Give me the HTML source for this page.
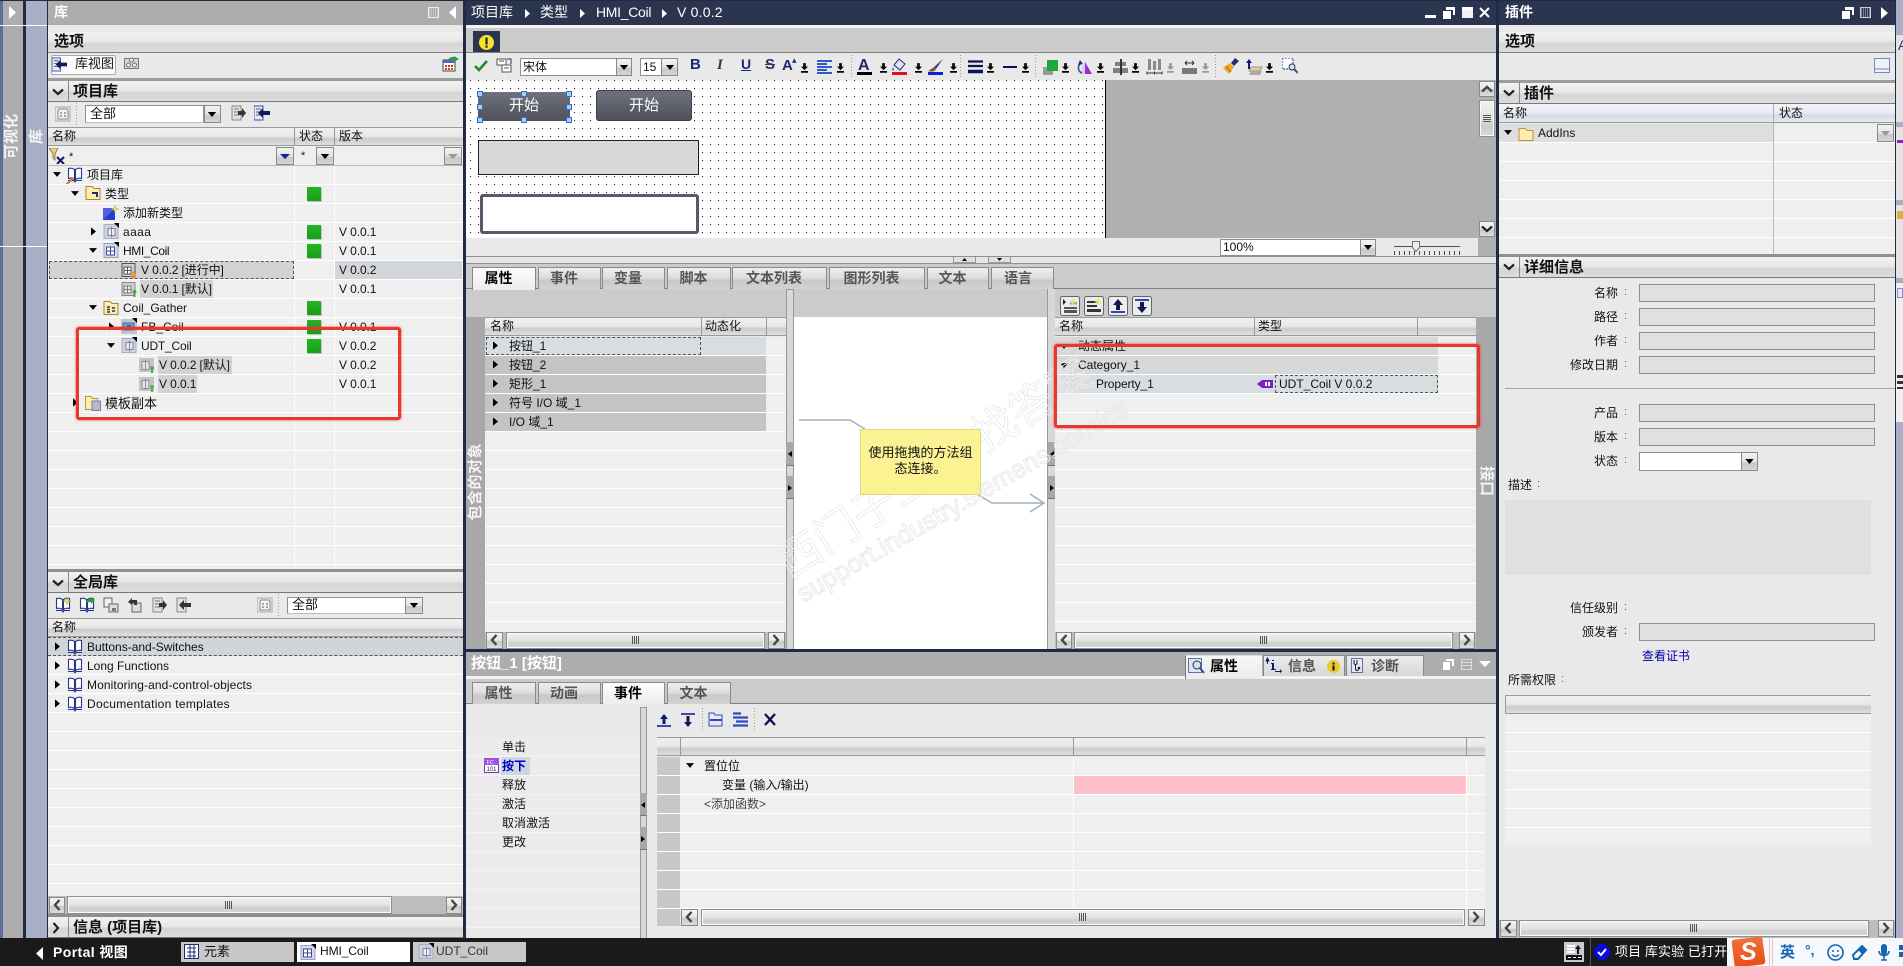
<!DOCTYPE html>
<html lang="zh-CN"><head><meta charset="utf-8"><title>HMI_Coil</title>
<style>
html,body{margin:0;padding:0;background:#1a1a1a}
#r{position:relative;width:1903px;height:966px;overflow:hidden;background:#e9e9e9;font:12px/19px "Liberation Sans","WenQuanYi Zen Hei","Noto Sans CJK SC",sans-serif;color:#111}
.b{position:absolute;box-sizing:border-box}
.t{position:absolute;white-space:nowrap;height:19px}
svg.i{position:absolute;overflow:visible}
.rows{background:repeating-linear-gradient(#efefef 0 18px,#fff 18px 19px)}
.hd{background:linear-gradient(#f0f0f0 0,#e8e8e8 50%,#cbcbcb 62%,#dfdfdf 100%);border-top:1px solid #9a9a9a;border-bottom:1px solid #9a9a9a}
.sec{background:linear-gradient(#f2f2f2 0,#e6e6e6 50%,#d5d5d5 55%,#dcdcdc 100%);border-bottom:1px solid #777}
.sec .t,.ttl{font-size:15px;font-weight:bold;color:#111}
.btn{background:linear-gradient(#f4f4f4,#e6e6e6 50%,#c8c8c8 55%,#dedede);border:1px solid #8a8a8a}
.sb{background:#bdbdbd}
.th{background:linear-gradient(#f1f1f1,#e2e2e2 50%,#cdcdcd 70%,#d8d8d8);border:1px solid #8f8f8f;box-shadow:inset 0 0 0 1px #fafafa}
.gr{position:absolute;width:8px;height:8px;background:repeating-linear-gradient(90deg,#555 0 1px,transparent 1px 2px)}
.tab{position:absolute;box-sizing:border-box;border:1px solid #8a8a8a;border-bottom:0;padding-right:11px;background:linear-gradient(#eeeeee,#dedede 45%,#c9c9c9 60%,#d2d2d2);text-align:center;font:bold 14px/21px "Liberation Sans","WenQuanYi Zen Hei","Noto Sans CJK SC",sans-serif;color:#555;height:22px}
.tab.a{background:linear-gradient(#fdfdfd,#ececec);color:#000;height:23px}
.fld{position:absolute;box-sizing:border-box;left:1639px;width:236px;height:18px;background:#e0e0e0;border:1px solid #8f8f8f}
.lb{position:absolute;white-space:nowrap;right:285px;height:19px}
.cl{position:absolute;left:1624px;width:4px;font-size:11px;color:#666;line-height:17px}
.wl{position:absolute;width:1px;background:#fff}
.st{position:absolute;width:14px;height:14px;background:linear-gradient(#24b524,#1a9d1a);box-shadow:1px 1px 0 #b5c9b5}
.v{position:absolute;writing-mode:vertical-rl;text-orientation:sideways;color:#f4f4f4;font-size:15px;font-weight:bold;white-space:nowrap}
.rd{position:absolute;box-sizing:border-box;border:3px solid #e8372c;border-radius:3px;box-shadow:0 0 2px #e8372c}
.hl{position:absolute;height:18px;background:#d2d2d2}
.combo{position:absolute;box-sizing:border-box;background:#fff;border:1px solid #8f8f8f;border-bottom-color:#bbb}
.cbtn{position:absolute;box-sizing:border-box;background:linear-gradient(#f3f3f3,#e3e3e3 50%,#c8c8c8 60%,#d5d5d5);border:1px solid #8a8a8a}
.h{position:absolute;width:6px;height:6px;background:#a9cdf2;border:1px solid #2f6fc4;box-sizing:border-box}
.ver{letter-spacing:-.1px}
</style></head><body><div id="r">
<svg width="0" height="0" style="position:absolute"><defs>
<symbol id="tr" viewBox="0 0 6 10"><path d="M0 0l6 5-6 5z" fill="#000"/></symbol>
<symbol id="td" viewBox="0 0 10 6"><path d="M0 0h10l-5 6z" fill="#000"/></symbol>
<symbol id="cl" viewBox="0 0 10 12"><path d="M7.500 1L3 6l4.500 5" fill="none" stroke="#444" stroke-width="2.400"/></symbol>
<symbol id="cr" viewBox="0 0 10 12"><path d="M2.500 1L7 6l-4.500 5" fill="none" stroke="#444" stroke-width="2.400"/></symbol>
<symbol id="cu" viewBox="0 0 12 10"><path d="M1 7.500L6 3l5 4.500" fill="none" stroke="#444" stroke-width="2.400"/></symbol>
<symbol id="cd" viewBox="0 0 12 10"><path d="M1 2.500L6 7l5-4.500" fill="none" stroke="#222" stroke-width="2.200"/></symbol>
<symbol id="book" viewBox="0 0 16 16"><path d="M1.500 1.500c2-.5 4-.5 6 1v10c-2-1.500-4-1.500-6-1zM14.500 1.500c-2-.5-4-.5-6 1v10c2-1.500 4-1.500 6-1z" fill="#fff" stroke="#26358f" stroke-width="1.100"/><path d="M1 13.500h6l1 1.500 1-1.500h6" fill="none" stroke="#26358f" stroke-width="1.100"/></symbol>
<symbol id="folder" viewBox="0 0 16 16"><path d="M1 2.500h6l2 2h6v10H1z" fill="#fdeeb0" stroke="#b8963c"/></symbol>
<symbol id="ft" viewBox="0 0 16 16"><path d="M1 1.500h6l2 2h6v11H1z" fill="#fdeeb0" stroke="#a8862c"/><path d="M7 7h6v5h-2V9H7z" fill="#222d70"/></symbol>
<symbol id="ty" viewBox="0 0 16 16"><rect x="1" y="1.500" width="14" height="14" fill="#d7dae8" stroke="#9aa0c0"/><rect x="3.500" y="5" width="8" height="8" fill="#fff" stroke="#3a4a9a"/><path d="M7.500 5v8M3.500 9h8" stroke="#3a4a9a"/><path d="M11 0h5v5z" fill="#000"/></symbol>
<symbol id="ud" viewBox="0 0 16 16"><rect x="1" y="1.500" width="14" height="14" fill="#cfd2de" stroke="#a9adc0"/><path d="M5 5.500h7v7H5zM8.500 3.500v11" fill="#eceef4" stroke="#7d83a5"/><path d="M11 0h5v5z" fill="#000"/></symbol>
<symbol id="vr" viewBox="0 0 16 16"><rect x="0" y="1" width="15" height="14" fill="#c4c4c4"/><path d="M3 4.500h7v8H3zM6.500 3v11" fill="#e6e6ea" stroke="#8f8f9f"/><path d="M11 11a2 2 0 1 1 4 0c0 1.200-1 1.500-1 1.500V16h-2v-3.500S11 12 11 11z" fill="#5aa95a"/></symbol>
<symbol id="vg" viewBox="0 0 16 16"><rect x="1" y="1.500" width="13" height="13" fill="#d0d0d0" stroke="#555"/><rect x="3" y="5" width="7" height="7" fill="#fff" stroke="#555"/><path d="M6.500 5v7M3 8.500h7" stroke="#555"/><path d="M12.500 8l3 7h-6z" fill="#f0a020"/><path d="M10.500 15h4" stroke="#d06010"/></symbol>
<symbol id="vd" viewBox="0 0 16 16"><rect x="1" y="1.500" width="13" height="13" fill="#d0d0d0" stroke="#888"/><rect x="3" y="5" width="7" height="7" fill="#eee" stroke="#777"/><path d="M6.500 5v7M3 8.500h7" stroke="#777"/><path d="M11.500 11a2 2 0 1 1 4 0c0 1.200-1 1.500-1 1.500V16h-2v-3.500s-1-.5-1-1.500z" fill="#4aa04a"/></symbol>
<symbol id="add" viewBox="0 0 16 16"><path d="M0 3h12v12H0z" fill="#2a3bd0"/><path d="M0 3h12L0 15z" fill="#4f5fe0"/><path d="M12 0l1 3 3 1-3 1-1 3-1-3-3-1 3-1z" fill="#e6e84a" stroke="#999a30" stroke-width=".3"/></symbol>
<symbol id="cg" viewBox="0 0 16 16"><path d="M1 1.500h6l2 2h6v11H1z" fill="#fdeeb0" stroke="#a8862c"/><path d="M4 7h3M4 9.500h3M4 12h3M9 8h3M9 11h3" stroke="#222d70" stroke-width="1.500"/></symbol>
<symbol id="fb" viewBox="0 0 16 16"><rect x="0" y="1" width="16" height="15" fill="#c4c4c4"/><rect x="2" y="5" width="11" height="7" fill="#5ba6dc" stroke="#3a78a8"/><path d="M6 7h4v4H6z" fill="#2a63a8"/><path d="M11 0h5v5z" fill="#000"/></symbol>
<symbol id="dl" viewBox="0 0 8 12"><path d="M2.500 1h3v4h2.500L4 9 0 5h2.500z" fill="#000"/><rect y="10" width="8" height="2" fill="#000"/></symbol>
<symbol id="dg" viewBox="0 0 8 12"><path d="M2.500 1h3v4h2.500L4 9 0 5h2.500z" fill="#999"/><rect y="10" width="8" height="2" fill="#999"/></symbol>
<symbol id="to" viewBox="0 0 16 16"><path d="M2 1h9v14H2z" fill="#e0e0e8" stroke="#888"/><path d="M4 4h5M4 7h5M4 10h5" stroke="#777"/><path d="M8 6h4V3l4 5-4 5v-3H8z" fill="#333"/></symbol>
<symbol id="ti" viewBox="0 0 16 16"><path d="M0 1h9v14H0z" fill="#e7e9f8" stroke="#3a4aa8"/><path d="M2 4h5M2 7h5M2 10h5" stroke="#556"/><path d="M16 6H9V3L4 8l5 5v-3h7z" fill="#111a60"/></symbol>
<symbol id="flt" viewBox="0 0 16 16"><rect x="0" y="1" width="15" height="14" fill="#e7e7e7" stroke="#aaa"/><path d="M3 5l1-2h8l1 2v8H3z" fill="#f3f3f3" stroke="#888"/><path d="M5 7h2M9 7h2M5 10h2M9 10h2" stroke="#555"/></symbol>
<symbol id="ff" viewBox="0 0 16 16"><path d="M0 0h9L6 6v6L4 10V6z" fill="#e8d070" stroke="#807030" stroke-width=".8"/><path d="M8 9l7 7M15 9l-7 7" stroke="#0a1a70" stroke-width="2"/></symbol>
<symbol id="tb" viewBox="0 0 20 20"><rect x=".5" y=".5" width="19" height="19" rx="2" fill="#ececec" stroke="#666"/></symbol>
<symbol id="zm" viewBox="0 0 16 16"><path d="M0 0h11v11H0z" fill="#fff" stroke="#222a70" stroke-dasharray="2 1"/><circle cx="10" cy="9" r="3" fill="#cfe3f5" stroke="#333"/><path d="M12 11l4 4" stroke="#33509a" stroke-width="2"/></symbol>
</defs></svg>

<!-- left strips -->
<div class="b" style="left:0;top:0;width:3px;height:938px;background:#5d6c9c"></div>
<div class="b" style="left:3px;top:0;width:20px;height:938px;background:#adadad"></div>
<div class="b" style="left:23px;top:0;width:3px;height:938px;background:#1f2a44"></div>
<div class="b" style="left:26px;top:0;width:21px;height:938px;background:#a9b0c6"></div>
<div class="b" style="left:47px;top:0;width:1px;height:938px;background:#1f2a44"></div>
<div class="b" style="left:0;top:0;width:1903px;height:1px;background:#1f2a44"></div>
<div class="b" style="left:0;top:25px;width:47px;height:1px;background:#fff"></div>
<div class="b" style="left:0;top:246px;width:47px;height:1px;background:#fff"></div>
<svg class="i" style="left:9px;top:6px" width="7" height="13"><path d="M0 0l7 6.500-7 6.500z" fill="#fff"/></svg>
<div class="v" style="left:2px;top:113px;height:46px;transform:rotate(180deg)">可视化</div>
<div class="v" style="left:27px;top:129px;transform:rotate(180deg)">库</div>

<!-- LEFT PANEL -->
<div class="b" style="left:48px;top:1px;width:415px;height:24px;background:#adadad"></div>
<span class="t ttl" style="left:54px;top:3px;color:#fff;font-size:14px">库</span>
<div class="b" style="left:428px;top:7px;width:11px;height:11px;border:1px solid #eee;background:repeating-linear-gradient(90deg,#c8c8c8 0 1px,#aaa 1px 2px)"></div>
<svg class="i" style="left:449px;top:6px" width="7" height="13"><path d="M7 0L0 6.500 7 13z" fill="#fff"/></svg>
<div class="b sec" style="left:48px;top:32px;width:415px;height:21px;border-bottom-color:#808080"><span class="t" style="left:6px;top:0">选项</span></div>
<div class="b" style="left:51px;top:55px;width:65px;height:20px;background:#fafafa;border:1px solid #aaa;border-radius:2px"></div>
<svg class="i" style="left:52px;top:57px" width="15" height="15"><use href="#ti"/></svg>
<span class="t" style="left:75px;top:54px;font-size:13px">库视图</span>
<svg class="i" style="left:124px;top:56px" width="15" height="14"><rect x=".5" y="2.500" width="14" height="10" fill="#d5d5d5" stroke="#777"/><circle cx="7.500" cy="4" r="2" fill="#eee" stroke="#777"/><circle cx="4.500" cy="9" r="2" fill="#eee" stroke="#777"/><circle cx="10.500" cy="9" r="2" fill="#eee" stroke="#777"/></svg>
<svg class="i" style="left:442px;top:56px" width="17" height="16"><rect x="1" y="4" width="12" height="11" fill="#fff" stroke="#444"/><path d="M1 4h12v3H1z" fill="#5068c0"/><path d="M3 9h2v2H3zM6 9h2v2H6zM9 9h2v2H9zM3 12h2v2H3zM6 12h2v2H6zM9 12h2v2H9z" fill="#c04020"/><path d="M6 4c1-3 4-3 6-3V0l5 3-5 3V4c-2 0-4 0-6 0z" fill="#2aa040"/></svg>
<div class="b" style="left:48px;top:78px;width:415px;height:3px;background:#9c9c9c"></div>
<div class="b sec" style="left:48px;top:81px;width:415px;height:21px"><span class="t" style="left:25px;top:1px">项目库</span></div>
<div class="b" style="left:68px;top:81px;width:1px;height:20px;background:#888"></div>
<svg class="i" style="left:52px;top:87px" width="12" height="10"><use href="#cd"/></svg>
<svg class="i" style="left:55px;top:106px" width="16" height="16"><use href="#flt"/></svg>
<div class="b" style="left:76px;top:103px;width:1px;height:22px;background-image:repeating-linear-gradient(#999 0 1px,transparent 1px 3px)"></div>
<div class="combo" style="left:85px;top:105px;width:119px;height:18px"></div>
<span class="t" style="left:90px;top:104px;font-size:13px">全部</span>
<div class="cbtn" style="left:204px;top:105px;width:17px;height:18px"></div>
<svg class="i" style="left:207px;top:112px" width="10" height="5"><use href="#td"/></svg>
<svg class="i" style="left:230px;top:105px" width="16" height="16"><use href="#to"/></svg>
<svg class="i" style="left:254px;top:105px" width="16" height="16"><use href="#ti"/></svg>
<div class="b hd" style="left:48px;top:127px;width:415px;height:19px"></div>
<div class="b" style="left:294px;top:127px;width:1px;height:19px;background:#999"></div>
<div class="b" style="left:334px;top:127px;width:1px;height:19px;background:#999"></div>
<span class="t" style="left:52px;top:127px">名称</span><span class="t" style="left:299px;top:127px">状态</span><span class="t" style="left:339px;top:127px">版本</span>
<div class="b" style="left:48px;top:146px;width:415px;height:20px;background:#efefef;border-bottom:1px solid #bbb"></div>
<svg class="i" style="left:49px;top:148px" width="16" height="16"><use href="#ff"/></svg>
<span class="t" style="left:69px;top:148px;font-size:11px">*</span>
<div class="cbtn" style="left:276px;top:147px;width:18px;height:18px"></div>
<svg class="i" style="left:280px;top:154px" width="10" height="5"><path d="M0 0h10l-5 5z" fill="#1420a0"/></svg>
<span class="t" style="left:301px;top:147px;font-size:11px">*</span>
<div class="cbtn" style="left:316px;top:147px;width:18px;height:18px"></div>
<svg class="i" style="left:320px;top:154px" width="10" height="5"><use href="#td"/></svg>
<div class="cbtn" style="left:444px;top:147px;width:18px;height:18px"></div>
<svg class="i" style="left:448px;top:154px" width="10" height="5"><path d="M0 0h10l-5 5z" fill="#999"/></svg>

<div class="b rows" style="left:48px;top:166px;width:415px;height:403px"></div>
<div class="wl" style="left:294px;top:166px;height:403px"></div>
<div class="wl" style="left:334px;top:166px;height:403px"></div>
<div class="b" style="left:49px;top:261px;width:245px;height:18px;background:#d2d2d2;border:1px dashed #555"></div>
<div class="b" style="left:335px;top:261px;width:127px;height:18px;background:#d2d6da"></div>
<div class="hl" style="left:140px;top:280px;width:73px"></div>
<div class="hl" style="left:158px;top:356px;width:74px"></div>
<div class="hl" style="left:158px;top:375px;width:39px"></div>

<svg class="i" style="left:53px;top:172px" width="8" height="5"><use href="#td"/></svg>
<svg class="i" style="left:67px;top:167px" width="16" height="16"><use href="#book"/></svg>
<svg class="i" style="left:66px;top:176px" width="8" height="8"><path d="M0 8l2-2 4-5 2 2-5 4z" fill="#e89030" stroke="#804010" stroke-width=".5"/></svg>
<span class="t" style="left:87px;top:166px">项目库</span>
<svg class="i" style="left:71px;top:191px" width="8" height="5"><use href="#td"/></svg>
<svg class="i" style="left:85px;top:185px" width="16" height="16"><use href="#ft"/></svg>
<span class="t" style="left:105px;top:185px">类型</span>
<svg class="i" style="left:103px;top:205px" width="16" height="16"><use href="#add"/></svg>
<span class="t" style="left:123px;top:204px">添加新类型</span>
<svg class="i" style="left:91px;top:227px" width="5" height="9"><use href="#tr"/></svg>
<svg class="i" style="left:103px;top:223px" width="16" height="16"><use href="#ud"/></svg>
<span class="t" style="left:123px;top:223px;letter-spacing:.4px">aaaa</span>
<svg class="i" style="left:89px;top:248px" width="8" height="5"><use href="#td"/></svg>
<svg class="i" style="left:103px;top:242px" width="16" height="16"><use href="#ty"/></svg>
<span class="t" style="left:123px;top:242px;letter-spacing:-.4px">HMI_Coil</span>
<svg class="i" style="left:121px;top:262px" width="16" height="16"><use href="#vg"/></svg>
<span class="t ver" style="left:141px;top:261px">V 0.0.2 [进行中]</span>
<svg class="i" style="left:121px;top:281px" width="16" height="16"><use href="#vd"/></svg>
<span class="t ver" style="left:141px;top:280px">V 0.0.1 [默认]</span>
<svg class="i" style="left:89px;top:305px" width="8" height="5"><use href="#td"/></svg>
<svg class="i" style="left:103px;top:300px" width="16" height="16"><use href="#cg"/></svg>
<span class="t" style="left:123px;top:299px">Coil_Gather</span>
<svg class="i" style="left:109px;top:322px" width="5" height="9"><use href="#tr"/></svg>
<svg class="i" style="left:121px;top:318px" width="16" height="16"><use href="#fb"/></svg>
<span class="t" style="left:141px;top:318px">FB_Coil</span>
<svg class="i" style="left:107px;top:343px" width="8" height="5"><use href="#td"/></svg>
<svg class="i" style="left:121px;top:337px" width="16" height="16"><use href="#ud"/></svg>
<span class="t" style="left:141px;top:337px;letter-spacing:-.2px">UDT_Coil</span>
<svg class="i" style="left:139px;top:357px" width="16" height="16"><use href="#vr"/></svg>
<span class="t ver" style="left:159px;top:356px">V 0.0.2 [默认]</span>
<svg class="i" style="left:139px;top:376px" width="16" height="16"><use href="#vr"/></svg>
<span class="t ver" style="left:159px;top:375px">V 0.0.1</span>
<svg class="i" style="left:73px;top:398px" width="5" height="9"><use href="#tr"/></svg>
<svg class="i" style="left:85px;top:395px" width="16" height="16"><path d="M.5 1.500h5l2 2h5v11h-12z" fill="#fdeeb0" stroke="#b8963c"/><rect x="7" y="6" width="8.500" height="9.500" fill="#b4bad6" stroke="#7a80a0"/></svg>
<span class="t" style="left:105px;top:394px;font-size:13px">模板副本</span>
<div class="st" style="left:307px;top:187px"></div><div class="st" style="left:307px;top:225px"></div><div class="st" style="left:307px;top:244px"></div><div class="st" style="left:307px;top:301px"></div><div class="st" style="left:307px;top:320px"></div><div class="st" style="left:307px;top:339px"></div>
<span class="t ver" style="left:339px;top:223px">V 0.0.1</span><span class="t ver" style="left:339px;top:242px">V 0.0.1</span><span class="t ver" style="left:339px;top:261px">V 0.0.2</span><span class="t ver" style="left:339px;top:280px">V 0.0.1</span><span class="t ver" style="left:339px;top:318px">V 0.0.1</span><span class="t ver" style="left:339px;top:337px">V 0.0.2</span><span class="t ver" style="left:339px;top:356px">V 0.0.2</span><span class="t ver" style="left:339px;top:375px">V 0.0.1</span>
<div class="rd" style="left:76px;top:327px;width:325px;height:93px"></div>

<!-- global lib -->
<div class="b" style="left:48px;top:569px;width:415px;height:3px;background:#909090"></div>
<div class="b sec" style="left:48px;top:572px;width:415px;height:21px"><span class="t" style="left:25px;top:1px">全局库</span></div>
<div class="b" style="left:68px;top:572px;width:1px;height:20px;background:#888"></div>
<svg class="i" style="left:52px;top:578px" width="12" height="10"><use href="#cd"/></svg>
<svg class="i" style="left:55px;top:597px" width="16" height="16"><use href="#book"/><path d="M12 0l1 3 3 1-3 1-1 3-1-3-3-1 3-1z" fill="#e6e84a" stroke="#999a30" stroke-width=".4"/></svg>
<svg class="i" style="left:79px;top:597px" width="16" height="16"><use href="#book"/><path d="M7 6c0-3 2-4 5-4V0l4 3-4 4V5c-2 0-3 0-5 1z" fill="#2aa040"/></svg>
<svg class="i" style="left:103px;top:597px" width="16" height="16"><path d="M1 1h8v9H1z" fill="#eee" stroke="#666"/><path d="M6 7h9v8H6z" fill="#ddd" stroke="#666"/><path d="M9 11h4v3H9z" fill="#777"/></svg>
<svg class="i" style="left:127px;top:597px" width="16" height="16"><path d="M5 6h9v9H5z" fill="#ddd" stroke="#666"/><path d="M1 5l4-4v2h5v5H7V6H5v2z" fill="#333"/></svg>
<svg class="i" style="left:151px;top:597px" width="16" height="16"><use href="#to"/></svg>
<svg class="i" style="left:175px;top:597px" width="16" height="16"><path d="M2 1h9v14H2z" fill="#e0e0e0" stroke="#888"/><path d="M16 6H9V3L4 8l5 5v-3h7z" fill="#333"/></svg>
<svg class="i" style="left:257px;top:597px" width="16" height="16"><use href="#flt"/></svg>
<div class="b" style="left:278px;top:594px;width:1px;height:22px;background-image:repeating-linear-gradient(#999 0 1px,transparent 1px 3px)"></div>
<div class="combo" style="left:287px;top:597px;width:119px;height:17px"></div>
<span class="t" style="left:292px;top:595px;font-size:13px">全部</span>
<div class="cbtn" style="left:405px;top:597px;width:18px;height:17px"></div>
<svg class="i" style="left:409px;top:603px" width="10" height="5"><use href="#td"/></svg>
<div class="b hd" style="left:48px;top:618px;width:415px;height:19px"></div>
<span class="t" style="left:52px;top:618px">名称</span>
<div class="b rows" style="left:48px;top:637px;width:415px;height:259px"></div>
<div class="b" style="left:48px;top:637px;width:415px;height:19px;background:#d0d5da;border-top:1px dashed #555;border-bottom:1px dashed #555"></div>
<svg class="i" style="left:55px;top:642px" width="5" height="9"><use href="#tr"/></svg><svg class="i" style="left:67px;top:639px" width="16" height="16"><use href="#book"/></svg><span class="t" style="left:87px;top:638px">Buttons-and-Switches</span>
<svg class="i" style="left:55px;top:661px" width="5" height="9"><use href="#tr"/></svg><svg class="i" style="left:67px;top:658px" width="16" height="16"><use href="#book"/></svg><span class="t" style="left:87px;top:657px">Long Functions</span>
<svg class="i" style="left:55px;top:680px" width="5" height="9"><use href="#tr"/></svg><svg class="i" style="left:67px;top:677px" width="16" height="16"><use href="#book"/></svg><span class="t" style="left:87px;top:676px;letter-spacing:.1px">Monitoring-and-control-objects</span>
<svg class="i" style="left:55px;top:699px" width="5" height="9"><use href="#tr"/></svg><svg class="i" style="left:67px;top:696px" width="16" height="16"><use href="#book"/></svg><span class="t" style="left:87px;top:695px;letter-spacing:.3px">Documentation templates</span>
<div class="b sb" style="left:48px;top:896px;width:415px;height:18px"></div>
<div class="b btn" style="left:49px;top:897px;width:16px;height:17px"></div><svg class="i" style="left:52px;top:899px" width="10" height="12"><use href="#cl"/></svg>
<div class="b th" style="left:67px;top:896px;width:325px;height:18px"></div><div class="gr" style="left:225px;top:901px"></div>
<div class="b btn" style="left:446px;top:897px;width:16px;height:17px"></div><svg class="i" style="left:449px;top:899px" width="10" height="12"><use href="#cr"/></svg>
<div class="b" style="left:48px;top:914px;width:415px;height:3px;background:#8f8f8f"></div>
<div class="b sec" style="left:48px;top:917px;width:415px;height:21px"><span class="t" style="left:25px;top:1px">信息 (项目库)</span></div>
<div class="b" style="left:68px;top:917px;width:1px;height:20px;background:#888"></div>
<svg class="i" style="left:52px;top:922px" width="8" height="12"><path d="M1.500 1L6 6l-4.500 5" fill="none" stroke="#222" stroke-width="2.200"/></svg>
<div class="b" style="left:463px;top:0;width:3px;height:938px;background:#1f2a44"></div>

<!-- CENTER TOP -->
<div class="b" style="left:466px;top:1px;width:1030px;height:24px;background:#2c3550"></div>
<span class="t" style="left:471px;top:3px;font-size:14px;color:#fff">项目库</span>
<svg class="i" style="left:525px;top:9px" width="5" height="9"><path d="M0 0l5 4.500-5 4.500z" fill="#fff"/></svg>
<span class="t" style="left:540px;top:3px;font-size:14px;color:#fff">类型</span>
<svg class="i" style="left:580px;top:9px" width="5" height="9"><path d="M0 0l5 4.500-5 4.500z" fill="#fff"/></svg>
<span class="t" style="left:596px;top:3px;font-size:14px;color:#fff;letter-spacing:-.3px">HMI_Coil</span>
<svg class="i" style="left:662px;top:9px" width="5" height="9"><path d="M0 0l5 4.500-5 4.500z" fill="#fff"/></svg>
<span class="t" style="left:677px;top:3px;font-size:14px;color:#fff;letter-spacing:.2px">V 0.0.2</span>
<div class="b" style="left:1425px;top:15px;width:11px;height:3px;background:#fff"></div>
<svg class="i" style="left:1443px;top:7px" width="12" height="12"><path d="M3 0h9v8h-2V3H3z" fill="#fff"/><rect y="4" width="8" height="8" fill="#fff"/></svg>
<svg class="i" style="left:1462px;top:7px" width="11" height="11"><rect width="11" height="3" fill="#fff"/><rect y="3" width="11" height="8" fill="#fff" opacity=".93"/></svg>
<svg class="i" style="left:1479px;top:7px" width="11" height="11"><path d="M1 1l9 9M10 1l-9 9" stroke="#fff" stroke-width="2"/></svg>
<div class="b" style="left:466px;top:25px;width:1030px;height:3px;background:#f2f2f2"></div>
<div class="b" style="left:466px;top:28px;width:1030px;height:24px;background:#cbcbcb"></div>
<div class="b" style="left:473px;top:31px;width:27px;height:22px;background:#2c3550"></div>
<svg class="i" style="left:479px;top:35px" width="15" height="15"><circle cx="7.500" cy="7.500" r="7.500" fill="#f6e32a"/><rect x="6.400" y="2.500" width="2.200" height="7" fill="#222"/><rect x="6.400" y="10.500" width="2.200" height="2.200" fill="#222"/></svg>
<div class="b" style="left:466px;top:52px;width:1030px;height:1px;background:#808080"></div>

<!-- editor toolbar -->
<svg class="i" style="left:474px;top:60px" width="14" height="12"><path d="M1 6l4 4 8-9" fill="none" stroke="#1f8a30" stroke-width="2.600"/></svg>
<svg class="i" style="left:497px;top:58px" width="15" height="15"><rect x="0" y="1" width="9" height="6" fill="#fff" stroke="#555"/><rect x="5" y="7" width="9" height="7" fill="#fff" stroke="#555"/><path d="M2 3h5M7 10h5" stroke="#555"/><path d="M10 1h4v5" fill="none" stroke="#334"/></svg>
<div class="combo" style="left:520px;top:58px;width:112px;height:18px;border:1px solid #8f8f8f"></div>
<span class="t" style="left:523px;top:58px;font-size:12px">宋体</span>
<div class="cbtn" style="left:616px;top:58px;width:16px;height:18px"></div><svg class="i" style="left:619px;top:65px" width="10" height="5"><use href="#td"/></svg>
<div class="combo" style="left:640px;top:58px;width:38px;height:18px;border:1px solid #8f8f8f"></div>
<span class="t" style="left:643px;top:58px">15</span>
<div class="cbtn" style="left:661px;top:58px;width:17px;height:18px"></div><svg class="i" style="left:665px;top:65px" width="10" height="5"><use href="#td"/></svg>
<span class="t" style="left:690px;top:55px;font:bold 15px/19px 'Liberation Sans',sans-serif;color:#1e2a6e">B</span>
<span class="t" style="left:717px;top:56px;font:italic bold 15px/19px 'Liberation Serif',serif;color:#2a3570">I</span>
<span class="t" style="left:741px;top:55px;font:bold 14px/19px 'Liberation Sans',sans-serif;color:#1e2a6e;text-decoration:underline">U</span>
<span class="t" style="left:765px;top:55px;font:bold 15px/19px 'Liberation Sans',sans-serif;color:#2a3560;text-decoration:line-through">S</span>
<span class="t" style="left:782px;top:56px;font:bold 15px/19px 'Liberation Sans',sans-serif;color:#1e2a6e">A</span><span class="t" style="left:792px;top:51px;font-size:9px;color:#1e2a6e">▴</span>
<svg class="i" style="left:801px;top:62px" width="7" height="11"><use href="#dl"/></svg>
<svg class="i" style="left:817px;top:60px" width="15" height="15"><path d="M0 1h15M0 4h10M0 7h15M0 10h10M0 13h15" stroke="#3358c8" stroke-width="2"/></svg>
<svg class="i" style="left:837px;top:62px" width="7" height="11"><use href="#dl"/></svg>
<div class="b" style="left:851px;top:55px;width:1px;height:24px;background-image:repeating-linear-gradient(#999 0 1px,transparent 1px 3px)"></div>
<span class="t" style="left:858px;top:56px;font:bold 16px/19px 'Liberation Sans',sans-serif;color:#1e2a6e">A</span><div class="b" style="left:857px;top:72px;width:15px;height:3px;background:#000"></div>
<svg class="i" style="left:880px;top:62px" width="7" height="11"><use href="#dl"/></svg>
<svg class="i" style="left:892px;top:59px" width="15" height="12"><path d="M7 0l6 5-5 6-6-5z" fill="#dfe3f2" stroke="#223070"/><path d="M1 8c-1 2-1 3 0 4 1-1 1-2 0-4" fill="#3050c0"/></svg><div class="b" style="left:892px;top:72px;width:15px;height:3px;background:#e01020"></div>
<svg class="i" style="left:915px;top:62px" width="7" height="11"><use href="#dl"/></svg>
<svg class="i" style="left:928px;top:59px" width="15" height="13"><path d="M15 0L6 8l2 2z" fill="#334080"/><path d="M6 8l2 2c-1 3-5 3-8 2 2-1 3-2 6-4z" fill="#8a5a20"/></svg><div class="b" style="left:928px;top:72px;width:15px;height:3px;background:#1020d0"></div>
<svg class="i" style="left:950px;top:62px" width="7" height="11"><use href="#dl"/></svg>
<div class="b" style="left:960px;top:55px;width:1px;height:24px;background-image:repeating-linear-gradient(#999 0 1px,transparent 1px 3px)"></div>
<svg class="i" style="left:968px;top:60px" width="15" height="14"><path d="M0 1.500h15M0 6h15" stroke="#0a1450" stroke-width="2.200"/><path d="M0 11.500h15" stroke="#0a1450" stroke-width="3.500"/></svg>
<svg class="i" style="left:987px;top:62px" width="7" height="11"><use href="#dl"/></svg>
<div class="b" style="left:1003px;top:66px;width:14px;height:2px;background:#0a1450"></div>
<svg class="i" style="left:1022px;top:62px" width="7" height="11"><use href="#dl"/></svg>
<div class="b" style="left:1035px;top:55px;width:1px;height:24px;background-image:repeating-linear-gradient(#999 0 1px,transparent 1px 3px)"></div>
<svg class="i" style="left:1043px;top:60px" width="16" height="15"><rect x="0" y="7" width="10" height="8" fill="#9a9a9a"/><rect x="4" y="0" width="11" height="11" fill="#1fa83a"/></svg>
<svg class="i" style="left:1062px;top:62px" width="7" height="11"><use href="#dl"/></svg>
<svg class="i" style="left:1077px;top:59px" width="16" height="16"><path d="M8 3l7 12H3z" fill="#9a30d0"/><path d="M8 3v12H3z" fill="#e3c8f3"/><path d="M5 14A5.500 5.500 0 0 1 3 5" fill="none" stroke="#3050a0" stroke-width="1.600"/><path d="M3 1l3 4-5 1z" fill="#222d70"/></svg>
<svg class="i" style="left:1097px;top:62px" width="7" height="11"><use href="#dl"/></svg>
<svg class="i" style="left:1113px;top:59px" width="15" height="16"><path d="M2 3h11v4H2zM0 9h15v5H0z" fill="#808080"/><path d="M7 0h2v16H7z" fill="#333"/></svg>
<svg class="i" style="left:1132px;top:62px" width="7" height="11"><use href="#dl"/></svg>
<svg class="i" style="left:1147px;top:59px" width="15" height="15"><path d="M1 0h3v11H1zM6 2h3v9H6zM11 0h3v11h-3z" fill="#8a8a8a"/><path d="M0 14h15M0 12.500v3M7.500 12.500v3M15 12.500v3" stroke="#333"/></svg>
<svg class="i" style="left:1167px;top:62px" width="7" height="11"><use href="#dg"/></svg>
<svg class="i" style="left:1182px;top:60px" width="15" height="14"><path d="M0 8h15v6H0z" fill="#7a7a7a"/><path d="M3 3h9M3 3l2-2M3 3l2 2M12 3l-2-2M12 3l-2 2" stroke="#333" fill="none"/></svg>
<svg class="i" style="left:1202px;top:62px" width="7" height="11"><use href="#dg"/></svg>
<div class="b" style="left:1215px;top:55px;width:1px;height:24px;background-image:repeating-linear-gradient(#999 0 1px,transparent 1px 3px)"></div>
<svg class="i" style="left:1223px;top:58px" width="16" height="16"><path d="M12 0l4 3-5 5-3-3z" fill="#26306e"/><path d="M7 5l4 4-5 7-6-6z" fill="#f0a828"/><path d="M3 8l5 6" stroke="#a86a10"/></svg>
<svg class="i" style="left:1246px;top:59px" width="17" height="16"><path d="M3 0l3 4H4v6H2V4H0z" fill="#0a1a70"/><path d="M5 8h11l-2 4H3z" fill="#e8cf90" stroke="#999"/><path d="M5 12h11l-2 4H3z" fill="#aaa"/></svg>
<svg class="i" style="left:1266px;top:62px" width="7" height="11"><use href="#dl"/></svg>
<svg class="i" style="left:1282px;top:58px" width="16" height="16"><use href="#zm"/></svg>

<!-- canvas -->
<svg class="i" style="left:466px;top:80px" width="639" height="158"><defs><pattern id="dot" x="0" y="0" width="8" height="8" patternUnits="userSpaceOnUse"><rect width="8" height="8" fill="#fff"/><rect x="4" y="0" width="1" height="1" fill="#111"/></pattern></defs><rect width="639" height="158" fill="url(#dot)"/></svg>
<div class="b" style="left:1105px;top:80px;width:1px;height:158px;background:#000"></div>
<div class="b" style="left:1106px;top:80px;width:390px;height:158px;background:#b0b0b0"></div>
<div class="b btn" style="left:1479px;top:81px;width:16px;height:16px"></div><svg class="i" style="left:1481px;top:84px" width="12" height="10"><use href="#cu"/></svg>
<div class="b th" style="left:1479px;top:100px;width:16px;height:37px"></div><div class="b" style="left:1483px;top:115px;width:8px;height:7px;background:repeating-linear-gradient(#555 0 1px,transparent 1px 2px)"></div>
<div class="b btn" style="left:1479px;top:221px;width:16px;height:16px"></div><svg class="i" style="left:1481px;top:224px" width="12" height="10"><use href="#cd"/></svg>

<div class="b" style="left:478px;top:92px;width:92px;height:29px;background:linear-gradient(#6e707c,#4f515d);border-radius:2px"></div>
<span class="t" style="left:477px;top:96px;width:94px;text-align:center;font-size:15px;color:#fff">开始</span>
<div class="h" style="left:477px;top:91px"></div><div class="h" style="left:521px;top:91px"></div><div class="h" style="left:566px;top:91px"></div><div class="h" style="left:477px;top:104px"></div><div class="h" style="left:566px;top:104px"></div><div class="h" style="left:477px;top:117px"></div><div class="h" style="left:521px;top:117px"></div><div class="h" style="left:566px;top:117px"></div>
<div class="b" style="left:596px;top:90px;width:96px;height:31px;background:linear-gradient(#6e707c,#4f515d);border:1px solid #3d3f4a;border-radius:3px"></div>
<span class="t" style="left:596px;top:96px;width:96px;text-align:center;font-size:15px;color:#fff">开始</span>
<div class="b" style="left:478px;top:140px;width:221px;height:35px;background:#d8d8d8;border:1px solid #1c2233"></div>
<div class="b" style="left:480px;top:194px;width:219px;height:40px;background:#fff;border:3px solid #555a66;border-radius:3px"></div>

<div class="b" style="left:466px;top:238px;width:1012px;height:18px;background:#e9e9e9"></div>
<div class="b" style="left:1478px;top:238px;width:18px;height:18px;background:#b0b0b0"></div>
<div class="combo" style="left:1220px;top:239px;width:141px;height:17px;border:1px solid #8f8f8f"></div>
<span class="t" style="left:1223px;top:238px;font-size:12px">100%</span>
<div class="cbtn" style="left:1360px;top:239px;width:16px;height:17px"></div><svg class="i" style="left:1363px;top:245px" width="10" height="5"><use href="#td"/></svg>
<div class="b" style="left:1394px;top:246px;width:66px;height:1px;background:#555"></div>
<div class="b" style="left:1394px;top:251px;width:66px;height:4px;background:repeating-linear-gradient(90deg,#444 0 1px,transparent 1px 5px)"></div>
<svg class="i" style="left:1412px;top:241px" width="8" height="11"><path d="M.5.500h7v6l-3.500 4-3.500-4z" fill="#eee" stroke="#777"/></svg>
<div class="b" style="left:466px;top:256px;width:1030px;height:1px;background:#909090"></div>
<div class="b" style="left:466px;top:257px;width:1030px;height:6px;background:#e6e6e6"></div>
<div class="b" style="left:953px;top:257px;width:23px;height:6px;background:#e0e0e0;border:1px solid #999;border-top:0"></div>
<div class="b" style="left:988px;top:257px;width:23px;height:6px;background:#e0e0e0;border:1px solid #999;border-top:0"></div>
<svg class="i" style="left:962px;top:258px" width="5" height="3"><path d="M0 3l2.500-3L5 3z"/></svg>
<svg class="i" style="left:997px;top:258px" width="5" height="3"><path d="M0 0h5L2.500 3z"/></svg>
<div class="b" style="left:466px;top:263px;width:1030px;height:1px;background:#909090"></div>
<div class="b" style="left:466px;top:264px;width:1030px;height:53px;background:#cbcbcb"></div>
<div class="b" style="left:466px;top:288px;width:1030px;height:1px;background:#7f7f7f"></div>
<div class="tab a" style="left:472px;top:267px;width:64px">属性</div>
<div class="tab" style="left:538px;top:267px;width:63px">事件</div>
<div class="tab" style="left:602px;top:267px;width:63px">变量</div>
<div class="tab" style="left:667px;top:267px;width:64px">脚本</div>
<div class="tab" style="left:732px;top:267px;width:95px">文本列表</div>
<div class="tab" style="left:829px;top:267px;width:96px">图形列表</div>
<div class="tab" style="left:927px;top:267px;width:62px">文本</div>
<div class="tab" style="left:991px;top:267px;width:63px;padding-right:9px">语言</div>

<!-- left sub pane -->
<div class="b" style="left:466px;top:317px;width:19px;height:332px;background:#a8a8a8"></div>
<div class="v" style="left:466px;top:443px;transform:rotate(180deg);font-size:15px;letter-spacing:.5px">包含的对象</div>
<div class="b hd" style="left:485px;top:317px;width:301px;height:19px"></div>
<div class="b" style="left:701px;top:317px;width:1px;height:19px;background:#999"></div>
<div class="b" style="left:766px;top:317px;width:1px;height:19px;background:#999"></div>
<span class="t" style="left:490px;top:317px">名称</span><span class="t" style="left:705px;top:317px">动态化</span>
<div class="b rows" style="left:485px;top:337px;width:301px;height:295px"></div>
<div class="b" style="left:485px;top:337px;width:281px;height:18px;background:#d8dde2"></div>
<div class="b" style="left:486px;top:337px;width:215px;height:18px;border:1px dashed #555"></div>
<div class="b" style="left:485px;top:356px;width:281px;height:18px;background:#c4c4c4"></div>
<div class="b" style="left:485px;top:375px;width:281px;height:18px;background:#c4c4c4"></div>
<div class="b" style="left:485px;top:394px;width:281px;height:18px;background:#c4c4c4"></div>
<div class="b" style="left:485px;top:413px;width:281px;height:18px;background:#c4c4c4"></div>
<svg class="i" style="left:493px;top:341px" width="5" height="9"><use href="#tr"/></svg><span class="t" style="left:509px;top:337px">按钮_1</span>
<svg class="i" style="left:493px;top:360px" width="5" height="9"><use href="#tr"/></svg><span class="t" style="left:509px;top:356px">按钮_2</span>
<svg class="i" style="left:493px;top:379px" width="5" height="9"><use href="#tr"/></svg><span class="t" style="left:509px;top:375px">矩形_1</span>
<svg class="i" style="left:493px;top:398px" width="5" height="9"><use href="#tr"/></svg><span class="t" style="left:509px;top:394px">符号 I/O 域_1</span>
<svg class="i" style="left:493px;top:417px" width="5" height="9"><use href="#tr"/></svg><span class="t" style="left:509px;top:413px">I/O 域_1</span>
<div class="b sb" style="left:485px;top:632px;width:301px;height:17px"></div>
<div class="b btn" style="left:486px;top:632px;width:17px;height:17px"></div><svg class="i" style="left:489px;top:634px" width="10" height="12"><use href="#cl"/></svg>
<div class="b th" style="left:506px;top:632px;width:259px;height:17px"></div><div class="gr" style="left:632px;top:636px"></div>
<div class="b btn" style="left:768px;top:632px;width:17px;height:17px"></div><svg class="i" style="left:771px;top:634px" width="10" height="12"><use href="#cr"/></svg>
<!-- splitter L -->
<div class="b" style="left:786px;top:289px;width:8px;height:360px;background:#d8d8d8;border:1px solid #999;border-bottom:0"></div>
<div class="b" style="left:786px;top:442px;width:8px;height:24px;background:#a8a8a8;border-bottom:1px solid #777"></div>
<div class="b" style="left:786px;top:476px;width:8px;height:23px;background:#a8a8a8;border-bottom:1px solid #777"></div>
<svg class="i" style="left:788px;top:451px" width="4" height="6"><path d="M4 0L0 3l4 3z"/></svg>
<svg class="i" style="left:788px;top:485px" width="4" height="6"><path d="M0 0l4 3-4 3z"/></svg>

<!-- middle -->
<div class="b" style="left:794px;top:317px;width:253px;height:332px;background:#fff"></div>
<svg class="i" style="left:794px;top:317px" width="253" height="332"><path d="M5 103h51l15 9M183 177l15 9h52" fill="none" stroke="#9fb4bd" stroke-width="1.600"/><path d="M236 177l14 9-14 9" fill="none" stroke="#9fb4bd" stroke-width="1.600"/></svg>

<!-- splitter R -->
<div class="b" style="left:1047px;top:289px;width:8px;height:360px;background:#d8d8d8;border-left:1px solid #999"></div>
<div class="b" style="left:1048px;top:442px;width:7px;height:24px;background:#a8a8a8;border-bottom:1px solid #777"></div>
<div class="b" style="left:1048px;top:476px;width:7px;height:23px;background:#a8a8a8;border-bottom:1px solid #777"></div>
<svg class="i" style="left:1050px;top:451px" width="4" height="6"><path d="M4 0L0 3l4 3z"/></svg>
<svg class="i" style="left:1050px;top:485px" width="4" height="6"><path d="M0 0l4 3-4 3z"/></svg>

<!-- right sub pane -->
<svg class="i" style="left:1060px;top:296px" width="20" height="20"><use href="#tb"/><path d="M3 3l3 3-3 3z" fill="#222"/><path d="M4 11h13v2H4zM4 14h13v3H4z" fill="#555"/><path d="M10 7h7" stroke="#68b0e0" stroke-width="3"/><path d="M13 2l1 3 3 1-3 1-1 3-1-3-3-1 3-1z" fill="#e6e84a"/></svg>
<svg class="i" style="left:1084px;top:296px" width="20" height="20"><use href="#tb"/><path d="M3 5h10v2H3zM3 9h10v2H3zM3 13h14v3H3z" fill="#333"/><path d="M14 2l1 3 3 1-3 1-1 3-1-3-3-1 3-1z" fill="#e6e84a"/></svg>
<svg class="i" style="left:1108px;top:296px" width="20" height="20"><use href="#tb"/><path d="M10 3l5 6h-3v5H8V9H5z" fill="#101850"/><rect x="3" y="15" width="14" height="2" fill="#3348b0"/></svg>
<svg class="i" style="left:1132px;top:296px" width="20" height="20"><use href="#tb"/><rect x="3" y="3" width="14" height="2" fill="#3348b0"/><path d="M8 6h4v5h3l-5 6-5-6h3z" fill="#101850"/></svg>
<div class="b hd" style="left:1055px;top:317px;width:421px;height:19px"></div>
<div class="b" style="left:1254px;top:317px;width:1px;height:19px;background:#999"></div>
<div class="b" style="left:1417px;top:317px;width:1px;height:19px;background:#999"></div>
<span class="t" style="left:1059px;top:317px">名称</span><span class="t" style="left:1258px;top:317px">类型</span>
<div class="b rows" style="left:1055px;top:337px;width:421px;height:295px"></div>
<div class="b" style="left:1055px;top:337px;width:383px;height:18px;background:#d8d8d8"></div>
<div class="b" style="left:1055px;top:356px;width:383px;height:18px;background:#d8d8d8"></div>
<div class="b" style="left:1057px;top:375px;width:381px;height:18px;background:#d8dde2"></div>
<svg class="i" style="left:1060px;top:344px" width="8" height="5"><use href="#td"/></svg><span class="t" style="left:1078px;top:337px">动态属性</span>
<svg class="i" style="left:1060px;top:363px" width="8" height="5"><use href="#td"/></svg><span class="t" style="left:1078px;top:356px">Category_1</span>
<span class="t" style="left:1096px;top:375px;letter-spacing:-.1px">Property_1</span>
<svg class="i" style="left:1257px;top:379px" width="16" height="10"><path d="M0 5l5-4h11v8H5z" fill="#7a20c0"/><rect x="8" y="3" width="5" height="4" fill="#fff"/><path d="M10.500 3v4" stroke="#7a20c0"/></svg>
<div class="b" style="left:1275px;top:375px;width:163px;height:18px;border:1px dashed #555"></div>
<span class="t" style="left:1279px;top:375px">UDT_Coil V 0.0.2</span>
<div class="b sb" style="left:1055px;top:632px;width:421px;height:17px"></div>
<div class="b btn" style="left:1056px;top:632px;width:16px;height:17px"></div><svg class="i" style="left:1059px;top:634px" width="10" height="12"><use href="#cl"/></svg>
<div class="b th" style="left:1074px;top:632px;width:379px;height:17px"></div><div class="gr" style="left:1260px;top:636px"></div>
<div class="b btn" style="left:1459px;top:632px;width:16px;height:17px"></div><svg class="i" style="left:1462px;top:634px" width="10" height="12"><use href="#cr"/></svg>
<div class="b" style="left:1476px;top:317px;width:20px;height:332px;background:#a8a8a8"></div>
<div class="v" style="left:1477px;top:466px;">接口</div>
<div class="b" style="left:1496px;top:0;width:3px;height:938px;background:#1f2a44"></div>

<!-- watermark -->
<div class="b" style="left:747px;top:445px;width:376px;height:48px;font-size:44px;line-height:48px;text-align:center;white-space:nowrap;color:transparent;-webkit-text-stroke:1px #ececec;transform:rotate(-33deg)">西门子工业 找答案</div>
<div class="b" style="left:762px;top:489px;width:400px;height:24px;font:26px/24px 'Liberation Sans',sans-serif;text-align:center;white-space:nowrap;color:transparent;-webkit-text-stroke:1px #e8e8e8;transform:rotate(-30deg)">support.industry.siemens.com/cs</div>
<!-- note -->
<div class="b" style="left:860px;top:429px;width:121px;height:66px;background:#fbf293;border:1px solid #e3d87a"></div>
<div class="b" style="left:866px;top:445px;width:109px;text-align:center;font-size:13px;line-height:16px;color:#111">使用拖拽的方法组态连接。</div>
<div class="rd" style="left:1054px;top:344px;width:426px;height:84px"></div>

<!-- BOTTOM PANE -->
<div class="b" style="left:466px;top:649px;width:1030px;height:3px;background:#1f2a44"></div>
<div class="b" style="left:466px;top:652px;width:1030px;height:24px;background:#adadad"></div>
<span class="t" style="left:471px;top:654px;font-size:15px;font-weight:bold;color:#fff">按钮_1 [按钮]</span>
<div class="b" style="left:466px;top:676px;width:1030px;height:3px;background:#f2f2f2"></div>
<div class="b" style="left:466px;top:679px;width:1030px;height:24px;background:#cbcbcb"></div>
<div class="b" style="left:466px;top:703px;width:1030px;height:1px;background:#7f7f7f"></div>
<div class="tab" style="left:472px;top:682px;width:64px">属性</div>
<div class="tab" style="left:538px;top:682px;width:63px">动画</div>
<div class="tab a" style="left:602px;top:682px;width:63px">事件</div>
<div class="tab" style="left:667px;top:682px;width:64px">文本</div>
<div class="b" style="left:466px;top:704px;width:1030px;height:234px;background:#e9e9e9"></div>

<div class="b" style="left:1185px;top:655px;width:77px;height:24px;background:linear-gradient(#f6f6f6,#ececec);border-left:1px solid #777;border-top:1px solid #ddd"></div>
<svg class="i" style="left:1188px;top:658px" width="16" height="16"><rect x=".5" y=".5" width="13" height="14" fill="#dfe3f4" stroke="#5f6fb0"/><circle cx="9" cy="7" r="4" fill="#cfe3f5" stroke="#333"/><path d="M12 10l4 5" stroke="#33509a" stroke-width="2"/></svg>
<span class="t" style="left:1210px;top:657px;font-size:14px;font-weight:bold;color:#000">属性</span>
<div class="b" style="left:1263px;top:655px;width:82px;height:21px;background:linear-gradient(#ececec,#d8d8d8);border:1px solid #888;border-bottom:0"></div>
<svg class="i" style="left:1266px;top:658px" width="16" height="15"><path d="M0 3h3l-1.500-3zM1.500 3v3" stroke="#0a1a70" fill="#0a1a70"/><path d="M6 2h2v1H6zM5 5h3v6h2v1H5v-1h1V6H5z" fill="#0a1a70"/><path d="M9 13h5v-2l2 2.500-2 1.500v-1H9z" fill="#0a1a70"/></svg>
<span class="t" style="left:1288px;top:657px;font-size:14px;font-weight:bold;color:#555">信息</span>
<svg class="i" style="left:1327px;top:660px" width="13" height="13"><circle cx="6.500" cy="6.500" r="6.500" fill="#eacb2e"/><rect x="5.500" y="2.500" width="2" height="2" fill="#111"/><rect x="5.500" y="5.500" width="2" height="5" fill="#111"/></svg>
<div class="b" style="left:1346px;top:655px;width:78px;height:21px;background:linear-gradient(#ececec,#d8d8d8);border:1px solid #888;border-bottom:0"></div>
<svg class="i" style="left:1351px;top:658px" width="12" height="15"><rect x=".5" y=".5" width="11" height="14" fill="#e3e6f6" stroke="#5f6fb0"/><path d="M3 2v3c0 2 3 2 3 0V2M4.500 7v4c0 2 3 2 3 0" fill="none" stroke="#222"/><circle cx="8" cy="10" r="1.300" fill="#222"/></svg>
<span class="t" style="left:1371px;top:657px;font-size:14px;font-weight:bold;color:#555">诊断</span>
<svg class="i" style="left:1443px;top:659px" width="12" height="11"><path d="M3 0h8v7H9V2H3z" fill="#fff"/><rect y="3" width="7" height="8" fill="#fff"/></svg>
<svg class="i" style="left:1461px;top:659px" width="11" height="11"><rect x=".5" y=".5" width="10" height="10" fill="none" stroke="#ddd"/><path d="M0 3.500h11M0 6.500h11" stroke="#ddd"/></svg>
<svg class="i" style="left:1479px;top:661px" width="12" height="6"><path d="M0 0h12L6 6z" fill="#fff"/></svg>

<!-- events -->
<div class="b" style="left:466px;top:738px;width:174px;height:190px;background:repeating-linear-gradient(#ebebeb 0 18px,#f4f4f4 18px 19px)"></div>
<div class="b" style="left:640px;top:707px;width:7px;height:231px;background:#d8d8d8;border:1px solid #999;border-bottom:0"></div>
<div class="b" style="left:640px;top:793px;width:7px;height:23px;background:#a8a8a8;border-bottom:1px solid #777"></div>
<div class="b" style="left:640px;top:827px;width:7px;height:23px;background:#a8a8a8;border-bottom:1px solid #777"></div>
<svg class="i" style="left:641px;top:802px" width="4" height="6"><path d="M4 0L0 3l4 3z"/></svg>
<svg class="i" style="left:641px;top:836px" width="4" height="6"><path d="M0 0l4 3-4 3z"/></svg>
<span class="t" style="left:502px;top:738px">单击</span>
<svg class="i" style="left:484px;top:758px" width="15" height="15"><rect x=".5" y=".5" width="14" height="14" fill="#fff" stroke="#7a30c0"/><rect x="0" y="0" width="15" height="7" fill="#a050e0"/><text x="2.500" y="6" font-size="5.500" fill="#fff" font-family="Liberation Sans">FC</text><text x="2.500" y="13" font-size="6" fill="#223" font-family="Liberation Sans">101</text></svg>
<div class="b" style="left:501px;top:757px;width:29px;height:18px;background:#cdd6e2"></div>
<span class="t" style="left:502px;top:757px;font-weight:bold;color:#0000c0">按下</span>
<span class="t" style="left:502px;top:776px">释放</span><span class="t" style="left:502px;top:795px">激活</span><span class="t" style="left:502px;top:814px">取消激活</span><span class="t" style="left:502px;top:833px">更改</span>

<svg class="i" style="left:657px;top:713px" width="14" height="15"><path d="M7 1l4 5H8.500v5h-3V6H3z" fill="#0a1a70"/><rect y="12" width="14" height="2" fill="#3348b0"/></svg>
<svg class="i" style="left:681px;top:713px" width="14" height="15"><rect width="14" height="2" fill="#3348b0"/><path d="M5.500 3h3v6H11l-4 5-4-5h2.500z" fill="#101850"/></svg>
<div class="b" style="left:702px;top:708px;width:1px;height:24px;background-image:repeating-linear-gradient(#999 0 1px,transparent 1px 3px)"></div>
<svg class="i" style="left:708px;top:712px" width="15" height="15"><path d="M1 1h5l1 2h7v11H1z" fill="#e5e9fa" stroke="#3348c0"/><path d="M2 7h12v2H2z" fill="#3348c0"/></svg>
<svg class="i" style="left:733px;top:712px" width="15" height="15"><path d="M0 1.500h8M0 5.500h15M3 9.500h12M0 13.500h15" stroke="#3348c0" stroke-width="2.200"/></svg>
<div class="b" style="left:754px;top:708px;width:1px;height:24px;background-image:repeating-linear-gradient(#999 0 1px,transparent 1px 3px)"></div>
<svg class="i" style="left:764px;top:713px" width="12" height="13"><path d="M1 1l10 11M11 1L1 12" stroke="#0a1450" stroke-width="2.400"/></svg>

<div class="b hd" style="left:657px;top:737px;width:828px;height:19px"></div>
<div class="b" style="left:680px;top:737px;width:1px;height:19px;background:#999"></div>
<div class="b" style="left:1073px;top:737px;width:1px;height:19px;background:#999"></div>
<div class="b" style="left:1466px;top:737px;width:1px;height:19px;background:#999"></div>
<div class="b rows" style="left:657px;top:757px;width:828px;height:152px"></div>
<div class="b" style="left:657px;top:757px;width:23px;height:152px;background:repeating-linear-gradient(#c8c8c8 0 18px,#fff 18px 19px)"></div>
<div class="wl" style="left:1073px;top:757px;height:152px"></div>
<div class="wl" style="left:1466px;top:757px;height:152px"></div>
<div class="b" style="left:1074px;top:776px;width:392px;height:18px;background:#ffc0cb"></div>
<svg class="i" style="left:686px;top:763px" width="8" height="5"><use href="#td"/></svg>
<span class="t" style="left:704px;top:757px">置位位</span>
<span class="t" style="left:722px;top:776px">变量 (输入/输出)</span>
<span class="t" style="left:704px;top:795px;color:#444">&lt;添加函数&gt;</span>
<div class="b" style="left:657px;top:909px;width:23px;height:17px;background:#c8c8c8"></div>
<div class="b btn" style="left:681px;top:909px;width:17px;height:17px"></div><svg class="i" style="left:684px;top:911px" width="10" height="12"><use href="#cl"/></svg>
<div class="b th" style="left:701px;top:909px;width:764px;height:17px"></div><div class="gr" style="left:1079px;top:913px"></div>
<div class="b btn" style="left:1468px;top:909px;width:17px;height:17px"></div><svg class="i" style="left:1471px;top:911px" width="10" height="12"><use href="#cr"/></svg>

<!-- RIGHT PANEL -->
<div class="b" style="left:1499px;top:1px;width:396px;height:24px;background:#2c3550"></div>
<span class="t" style="left:1505px;top:3px;font-size:14px;font-weight:bold;color:#fff">插件</span>
<svg class="i" style="left:1842px;top:7px" width="12" height="12"><path d="M3 0h9v8h-2V3H3z" fill="#fff"/><rect y="4" width="8" height="8" fill="#fff"/></svg>
<div class="b" style="left:1860px;top:7px;width:11px;height:11px;border:1px solid #ccc;background:repeating-linear-gradient(90deg,#7a8098 0 1px,#2c3550 1px 2px)"></div>
<svg class="i" style="left:1881px;top:7px" width="7" height="12"><path d="M0 0l7 6-7 6z" fill="#fff"/></svg>
<div class="b sec" style="left:1499px;top:32px;width:396px;height:21px;border-bottom-color:#808080"><span class="t" style="left:6px;top:0">选项</span></div>
<svg class="i" style="left:1874px;top:58px" width="16" height="15"><rect x=".5" y=".5" width="15" height="14" fill="#eef0fa" stroke="#7a88c0"/><path d="M1 11h14" stroke="#7a88c0"/></svg>
<div class="b" style="left:1499px;top:80px;width:396px;height:3px;background:#9c9c9c"></div>
<div class="b sec" style="left:1499px;top:83px;width:396px;height:21px"><span class="t" style="left:25px;top:1px">插件</span></div>
<div class="b" style="left:1519px;top:83px;width:1px;height:20px;background:#888"></div>
<svg class="i" style="left:1503px;top:88px" width="12" height="10"><use href="#cd"/></svg>
<div class="b" style="left:1499px;top:104px;width:396px;height:19px;background:linear-gradient(#f2f5f8,#e8ecf2 50%,#d6dce4 62%,#e4e8ee);border-bottom:1px solid #9a9a9a"></div>
<div class="b" style="left:1773px;top:104px;width:1px;height:150px;background:#b0b0b0"></div>
<span class="t" style="left:1503px;top:104px">名称</span><span class="t" style="left:1779px;top:104px">状态</span>
<div class="b rows" style="left:1499px;top:124px;width:396px;height:130px;z-index:0"></div>
<div class="b" style="left:1773px;top:124px;width:1px;height:130px;background:#b8b8b8"></div>
<div class="b" style="left:1499px;top:124px;width:274px;height:18px;background:#dedede"></div>
<svg class="i" style="left:1504px;top:130px" width="8" height="5"><use href="#td"/></svg>
<svg class="i" style="left:1518px;top:126px" width="16" height="16"><use href="#folder"/></svg>
<span class="t" style="left:1538px;top:124px">AddIns</span>
<div class="cbtn" style="left:1877px;top:124px;width:17px;height:18px"></div><svg class="i" style="left:1881px;top:131px" width="9" height="5"><path d="M0 0h9L4.500 5z" fill="#999"/></svg>
<div class="b" style="left:1499px;top:254px;width:396px;height:3px;background:#909090"></div>
<div class="b sec" style="left:1499px;top:257px;width:396px;height:21px"><span class="t" style="left:25px;top:1px">详细信息</span></div>
<div class="b" style="left:1519px;top:257px;width:1px;height:20px;background:#888"></div>
<svg class="i" style="left:1503px;top:262px" width="12" height="10"><use href="#cd"/></svg>

<span class="lb" style="top:284px">名称</span><span class="cl" style="top:284px">:</span><div class="fld" style="top:284px"></div>
<span class="lb" style="top:308px">路径</span><span class="cl" style="top:308px">:</span><div class="fld" style="top:308px"></div>
<span class="lb" style="top:332px">作者</span><span class="cl" style="top:332px">:</span><div class="fld" style="top:332px"></div>
<span class="lb" style="top:356px">修改日期</span><span class="cl" style="top:356px">:</span><div class="fld" style="top:356px"></div>
<div class="b" style="left:1505px;top:388px;width:390px;height:1px;background:#a5a5a5"></div>
<span class="lb" style="top:404px">产品</span><span class="cl" style="top:404px">:</span><div class="fld" style="top:404px"></div>
<span class="lb" style="top:428px">版本</span><span class="cl" style="top:428px">:</span><div class="fld" style="top:428px"></div>
<span class="lb" style="top:452px">状态</span><span class="cl" style="top:452px">:</span>
<div class="combo" style="left:1639px;top:452px;width:103px;height:19px;border:1px solid #8f8f8f"></div>
<div class="cbtn" style="left:1741px;top:452px;width:17px;height:19px"></div><svg class="i" style="left:1745px;top:459px" width="9" height="5"><use href="#td"/></svg>
<span class="t" style="left:1508px;top:476px">描述</span><span class="cl" style="left:1537px;top:476px">:</span>
<div class="b" style="left:1505px;top:500px;width:366px;height:75px;background:#e0e0e0"></div>
<span class="lb" style="top:599px">信任级别</span><span class="cl" style="top:599px">:</span>
<span class="lb" style="top:623px">颁发者</span><span class="cl" style="top:623px">:</span><div class="fld" style="top:623px"></div>
<span class="t" style="left:1642px;top:647px;color:#0000a8">查看证书</span>
<span class="t" style="left:1508px;top:671px">所需权限</span><span class="cl" style="left:1561px;top:671px">:</span>
<div class="b hd" style="left:1505px;top:695px;width:366px;height:19px;border-left:1px solid #9a9a9a"></div>
<div class="b rows" style="left:1505px;top:714px;width:366px;height:131px"></div>
<div class="b sb" style="left:1499px;top:920px;width:396px;height:18px"></div>
<div class="b btn" style="left:1500px;top:920px;width:17px;height:17px"></div><svg class="i" style="left:1503px;top:922px" width="10" height="12"><use href="#cl"/></svg>
<div class="b th" style="left:1519px;top:920px;width:350px;height:17px"></div><div class="gr" style="left:1690px;top:924px"></div>
<div class="b btn" style="left:1878px;top:920px;width:16px;height:17px"></div><svg class="i" style="left:1881px;top:922px" width="10" height="12"><use href="#cr"/></svg>

<div class="b" style="left:1895px;top:0;width:1px;height:938px;background:#1f2a44"></div>
<div class="b" style="left:1896px;top:0;width:7px;height:938px;background:#a9b0c6"></div>
<div class="b" style="left:1896px;top:34px;width:7px;height:88px;background:#e3e3e3;border-top:1px solid #aaa"></div>
<span class="t" style="left:1898px;top:36px;font-size:14px;color:#223080">A</span>
<div class="b" style="left:1896px;top:126px;width:7px;height:74px;background:#e3e3e3;border-top:1px solid #aaa"></div>
<div class="b" style="left:1897px;top:140px;width:6px;height:3px;background:#8a1fd0"></div>
<div class="b" style="left:1896px;top:204px;width:7px;height:74px;background:#e3e3e3;border-top:1px solid #aaa"></div>
<div class="b" style="left:1897px;top:211px;width:6px;height:8px;background:#d8b040"></div>
<div class="b" style="left:1896px;top:282px;width:7px;height:140px;background:#efefef;border-top:1px solid #aaa"></div>
<div class="b" style="left:1897px;top:288px;width:6px;height:10px;background:#e4e8f6;border:1px solid #8890b8"></div>
<div class="b" style="left:1897px;top:375px;width:6px;height:14px;background:repeating-linear-gradient(#333 0 3px,transparent 3px 6px)"></div>

<!-- BOTTOM BAR -->
<div class="b" style="left:0;top:938px;width:1903px;height:28px;background:#1a1a1a"></div>
<svg class="i" style="left:36px;top:947px" width="7" height="13"><path d="M7 0L0 6.500 7 13z" fill="#fff"/></svg>
<span class="t" style="left:53px;top:943px;font-size:14px;font-weight:bold;color:#fff;letter-spacing:.4px">Portal 视图</span>
<div class="b" style="left:181px;top:942px;width:113px;height:20px;background:#c8c8c8"></div>
<svg class="i" style="left:184px;top:944px" width="15" height="15"><rect x=".5" y=".5" width="14" height="14" fill="#fff" stroke="#1f2a70"/><path d="M3 4h9M3 8h9M3 12h9M6 1v13M10 1v13" stroke="#1f2a70"/></svg>
<span class="t" style="left:204px;top:942px;font-size:13px">元素</span>
<div class="b" style="left:297px;top:942px;width:113px;height:20px;background:#fff"></div>
<svg class="i" style="left:300px;top:944px" width="16" height="16"><use href="#ty"/></svg>
<span class="t" style="left:320px;top:942px;font-size:12px;letter-spacing:-.1px">HMI_Coil</span>
<div class="b" style="left:413px;top:942px;width:113px;height:20px;background:#c8c8c8"></div>
<svg class="i" style="left:418px;top:943px" width="16" height="16"><use href="#ud"/></svg>
<span class="t" style="left:436px;top:942px;font-size:12px;color:#333">UDT_Coil</span>
<svg class="i" style="left:1564px;top:942px" width="20" height="20"><rect width="20" height="20" fill="#c8c8d0"/><path d="M3 4h8M3 7h8M3 10h8" stroke="#fff" stroke-width="2"/><path d="M14 3l3 4h-2v5h-2V7h-2z" fill="#111"/><path d="M2 13h16v5H2z" fill="#111"/><path d="M4 15h3v1H4zM9 15h3v1H9zM14 15h3v1h-3z" fill="#fff"/></svg>
<div class="b" style="left:1590px;top:938px;width:1px;height:28px;background:#555"></div>
<svg class="i" style="left:1594px;top:944px" width="16" height="16"><circle cx="8" cy="8" r="8" fill="#0a0adf"/><path d="M4 8l3 3 5-6" fill="none" stroke="#fff" stroke-width="2"/></svg>
<span class="t" style="left:1615px;top:942px;font-size:13px;color:#fff;letter-spacing:.1px">项目 库实验 已打开</span>
<div class="b" style="left:1727px;top:938px;width:176px;height:28px;background:#f5f9fd"></div>
<div class="b" style="left:1733px;top:938px;width:31px;height:28px;background:linear-gradient(#f2703a,#e84e12);transform:rotate(-7deg);border-radius:3px"></div>
<span class="t" style="left:1740px;top:940px;font:italic bold 25px/25px 'Liberation Sans',sans-serif;color:#fff">S</span>
<div class="b" style="left:1769px;top:938px;width:1px;height:28px;background:#ebc4b4"></div>
<div class="b" style="left:1772px;top:938px;width:1px;height:28px;background:#ebc4b4"></div>
<span class="t" style="left:1780px;top:943px;font-size:15px;font-weight:bold;color:#1565b0">英</span>
<span class="t" style="left:1805px;top:941px;font-size:14px;font-weight:bold;color:#1565b0">°,</span>
<svg class="i" style="left:1827px;top:944px" width="17" height="17"><circle cx="8.500" cy="8.500" r="7.500" fill="none" stroke="#1565b0" stroke-width="1.600"/><circle cx="6" cy="7" r="1" fill="#1565b0"/><circle cx="11" cy="7" r="1" fill="#1565b0"/><path d="M5 10.500c2 2.500 5 2.500 7 0" fill="none" stroke="#1565b0" stroke-width="1.400"/></svg>
<svg class="i" style="left:1852px;top:945px" width="15" height="15"><path d="M10 1l4 4-8 9H2l-1-4z" fill="none" stroke="#1565b0" stroke-width="2"/><path d="M10 1l4 4-4 4-4-4z" fill="#1565b0"/></svg>
<svg class="i" style="left:1878px;top:944px" width="12" height="17"><rect x="3" y="0" width="6" height="11" rx="3" fill="#1565b0"/><path d="M1 7c0 6 10 6 10 0M6 12v4M3 16h6" fill="none" stroke="#1565b0" stroke-width="1.600"/></svg>
<div class="b" style="left:1899px;top:945px;width:4px;height:5px;background:#1565b0"></div><div class="b" style="left:1899px;top:952px;width:4px;height:5px;background:#1565b0"></div>
</div></body></html>
